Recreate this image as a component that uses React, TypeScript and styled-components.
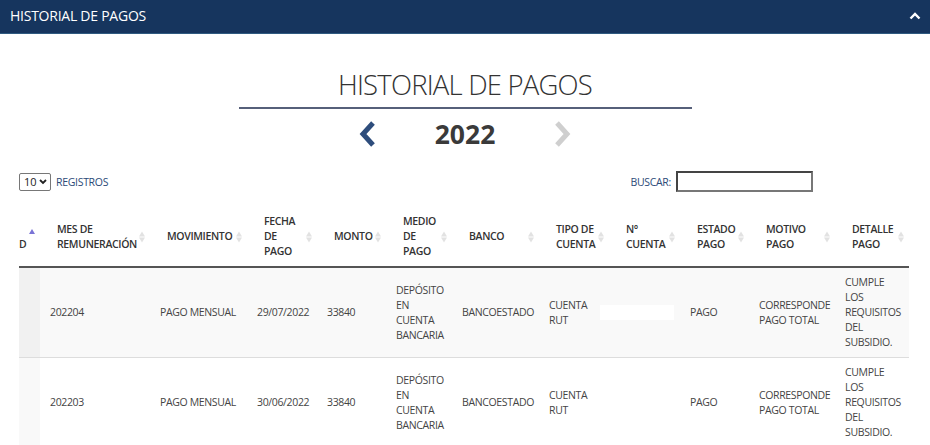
import React from 'react';
import styled, { createGlobalStyle } from 'styled-components';

const Global = createGlobalStyle`
  html, body { margin: 0; padding: 0; background: #fff; }
  body { font-family: "Open Sans", "Noto Sans", sans-serif; color: #333; }
  * { box-sizing: border-box; }
`;

const Page = styled.div`
  width: 930px;
  height: 445px;
  overflow: hidden;
  background: #fff;
`;

const TopBar = styled.div`
  height: 34px;
  background: #16355e;
  border-bottom: 1px solid #2f5a80;
  display: flex;
  align-items: center;
  justify-content: space-between;
  padding: 0 9px 2px 10px;
`;

const TopTitle = styled.div`
  color: #fff;
  font-size: 14px;
  letter-spacing: -0.25px;
`;

const Heading = styled.div`
  display: flex;
  flex-direction: column;
  align-items: center;
  margin-top: 31px;
`;

const Title = styled.h1`
  margin: 0;
  font-size: 27.5px;
  font-weight: 300;
  letter-spacing: -0.8px;
  color: #333;
  line-height: 40px;
  width: 453px;
  text-align: center;
  border-bottom: 2px solid #56607a;
  padding-bottom: 2px;
`;

const YearRow = styled.div`
  display: flex;
  align-items: center;
  gap: 58px;
  margin-top: 9px;
  height: 32px;
`;

const Year = styled.div`
  font-size: 26.5px;
  font-weight: 700;
  color: #3a3a3a;
  line-height: 32px;
`;

const Controls = styled.div`
  display: flex;
  justify-content: space-between;
  align-items: center;
  padding: 0 117px 0 19px;
  margin-top: 21px;
`;

const LenGroup = styled.div`
  display: flex;
  align-items: center;
  gap: 5px;
`;

const SelectBox = styled.div`
  width: 32px;
  height: 18px;
  border: 1px solid #777;
  border-radius: 2px;
  display: flex;
  align-items: center;
  justify-content: space-between;
  padding: 0 3px 0 4px;
  font-size: 11px;
  color: #222;
`;

const NavLabel = styled.span`
  font-size: 10.5px;
  letter-spacing: -0.3px;
  color: #2c4a77;
`;

const SearchGroup = styled.div`
  display: flex;
  align-items: center;
  gap: 5px;
`;

const SearchInput = styled.div`
  width: 137px;
  height: 21px;
  border: 2px solid #444;
  border-right-color: #777;
  border-bottom-color: #777;
`;

const Table = styled.table`
  margin: 15px 0 0 19px;
  width: 890px;
  table-layout: fixed;
  border-collapse: collapse;
`;

const Th = styled.th<{ $w: number }>`
  width: ${(p) => p.$w}px;
  position: relative;
  text-align: left;
  vertical-align: middle;
  font-size: 10.5px;
  font-weight: 600;
  letter-spacing: -0.35px;
  color: #333;
  line-height: 15px;
  padding: 6px 10px 6px 17px;
  height: 60px;
  white-space: nowrap;
  border-bottom: 2px solid #555;
`;

const FirstTh = styled(Th)`
  padding: 16px 0 0 0;
`;

const SortIcon = styled.span`
  position: absolute;
  right: 5px;
  top: 50%;
  transform: translateY(-50%);
  display: flex;
  flex-direction: column;
  gap: 1px;
`;

const Tri = styled.span<{ $up?: boolean; $color: string }>`
  display: block;
  width: 0;
  height: 0;
  border-left: 3.5px solid transparent;
  border-right: 3.5px solid transparent;
  ${(p) =>
    p.$up
      ? `border-bottom: 5px solid ${p.$color};`
      : `border-top: 5px solid ${p.$color};`}
`;

const ActiveSort = styled.span`
  position: absolute;
  left: 10px;
  top: 22px;
`;

const Tr = styled.tr<{ $odd: boolean }>`
  background: ${(p) => (p.$odd ? '#f9f9f9' : '#fff')};
  border-bottom: 1px solid #ddd;
`;

const Td = styled.td`
  font-size: 10.5px;
  letter-spacing: -0.35px;
  color: #444;
  line-height: 15px;
  padding: 7px 10px 7px 10px;
  height: 90px;
  vertical-align: middle;
  white-space: nowrap;
  overflow: visible;
`;

const SortedTd = styled(Td)<{ $odd: boolean }>`
  background: ${(p) => (p.$odd ? '#f1f1f1' : '#f9f9f9')};
`;

const Redacted = styled.span`
  display: inline-block;
  width: 74px;
  height: 15px;
  background: #fff;
  margin-left: -19px;
  vertical-align: middle;
`;

const ChevLeft = () => (
  <svg width="18" height="26" viewBox="0 0 18 26">
    <polyline points="14,2 4,13 14,24" fill="none" stroke="#2e4d7c" strokeWidth="5" strokeLinejoin="miter" />
  </svg>
);
const ChevRight = () => (
  <svg width="18" height="26" viewBox="0 0 18 26">
    <polyline points="4,2 14,13 4,24" fill="none" stroke="#cfcfcf" strokeWidth="5" strokeLinejoin="miter" />
  </svg>
);

const cols: { w: number; label: string[] }[] = [
  { w: 21, label: ['D'] },
  { w: 110, label: ['MES DE', 'REMUNERACIÓN'] },
  { w: 97, label: ['MOVIMIENTO'] },
  { w: 70, label: ['FECHA', 'DE', 'PAGO'] },
  { w: 69, label: ['MONTO'] },
  { w: 66, label: ['MEDIO', 'DE', 'PAGO'] },
  { w: 87, label: ['BANCO'] },
  { w: 70, label: ['TIPO DE', 'CUENTA'] },
  { w: 71, label: ['N°', 'CUENTA'] },
  { w: 69, label: ['ESTADO', 'PAGO'] },
  { w: 86, label: ['MOTIVO', 'PAGO'] },
  { w: 74, label: ['DETALLE', 'PAGO'] },
];

const rows = [
  ['202204', 'PAGO MENSUAL', '29/07/2022', '33840'],
  ['202203', 'PAGO MENSUAL', '30/06/2022', '33840'],
];

const Lines = ({ lines }: { lines: string[] }) => (
  <>
    {lines.map((l, i) => (
      <React.Fragment key={i}>
        {i > 0 && <br />}
        {l}
      </React.Fragment>
    ))}
  </>
);

export default function App() {
  return (
    <Page>
      <Global />
      <TopBar>
        <TopTitle>HISTORIAL DE PAGOS</TopTitle>
        <svg width="12" height="8" viewBox="0 0 12 8">
          <polyline points="1.5,6.5 6,2 10.5,6.5" fill="none" stroke="#fff" strokeWidth="2.4" />
        </svg>
      </TopBar>
      <Heading>
        <Title>HISTORIAL DE PAGOS</Title>
        <YearRow>
          <ChevLeft />
          <Year>2022</Year>
          <ChevRight />
        </YearRow>
      </Heading>
      <Controls>
        <LenGroup>
          <SelectBox>
            <span>10</span>
            <svg width="8" height="6" viewBox="0 0 8 6">
              <polyline points="1,1 4,4 7,1" fill="none" stroke="#222" strokeWidth="1.8" />
            </svg>
          </SelectBox>
          <NavLabel>REGISTROS</NavLabel>
        </LenGroup>
        <SearchGroup>
          <NavLabel>BUSCAR:</NavLabel>
          <SearchInput />
        </SearchGroup>
      </Controls>
      <Table>
        <thead>
          <tr>
            {cols.map((c, i) =>
              i === 0 ? (
                <FirstTh key={i} $w={c.w}>
                  D
                  <ActiveSort>
                    <Tri $up $color="#7a74d6" />
                  </ActiveSort>
                </FirstTh>
              ) : (
                <Th key={i} $w={c.w}>
                  <Lines lines={c.label} />
                  <SortIcon>
                    <Tri $up $color="#e2e2e2" />
                    <Tri $color="#e2e2e2" />
                  </SortIcon>
                </Th>
              )
            )}
          </tr>
        </thead>
        <tbody>
          {rows.map((r, ri) => {
            const odd = ri === 0;
            return (
              <Tr key={ri} $odd={odd}>
                <SortedTd $odd={odd} />
                <Td>{r[0]}</Td>
                <Td>{r[1]}</Td>
                <Td>{r[2]}</Td>
                <Td>{r[3]}</Td>
                <Td>
                  <Lines lines={['DEPÓSITO', 'EN', 'CUENTA', 'BANCARIA']} />
                </Td>
                <Td>BANCOESTADO</Td>
                <Td>
                  <Lines lines={['CUENTA', 'RUT']} />
                </Td>
                <Td>{odd ? <Redacted /> : null}</Td>
                <Td>PAGO</Td>
                <Td>
                  <Lines lines={['CORRESPONDE', 'PAGO TOTAL']} />
                </Td>
                <Td>
                  <Lines lines={['CUMPLE', 'LOS', 'REQUISITOS', 'DEL', 'SUBSIDIO.']} />
                </Td>
              </Tr>
            );
          })}
        </tbody>
      </Table>
    </Page>
  );
}
